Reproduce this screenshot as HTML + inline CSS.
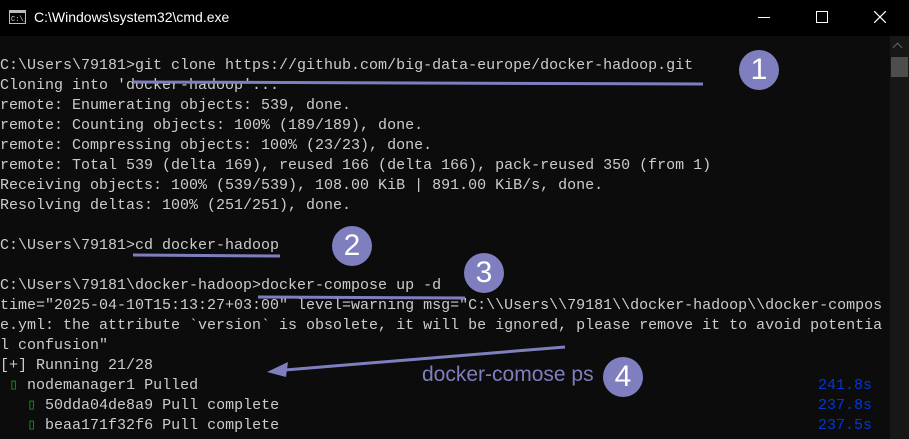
<!DOCTYPE html><html><head><style>
body{margin:0;width:909px;height:439px;background:#0c0c0c;overflow:hidden;position:relative;font-family:"Liberation Sans",sans-serif}
.tb{position:absolute;left:0;top:0;width:909px;height:36px;background:#000;color:#fff;font-size:14px}
pre{position:absolute;left:0;top:56px;margin:0;font-family:"Liberation Mono",monospace;font-size:15px;line-height:20px;color:#cccccc}
.g{color:#13a10e}
.b{position:absolute;left:818px;font-family:"Liberation Mono",monospace;font-size:15px;line-height:20px;color:#0037da}
.sb{position:absolute;left:890px;top:36px;width:19px;height:403px;background:#171717}
.c{position:absolute;width:40px;height:40px;border-radius:50%;background:#7f7fbf;color:#fff;font-size:30px;text-align:center;line-height:40px}
</style></head><body>
<div class="tb">
<svg style="position:absolute;left:9px;top:10px" width="17" height="14"><rect x="0.5" y="0.5" width="16" height="13" fill="#000" stroke="#bbb"/><rect x="1" y="1" width="15" height="2" fill="#bbb"/><text x="2" y="11" font-size="7" fill="#ddd" font-family="Liberation Mono">C:\_</text></svg>
<span style="position:absolute;left:34px;top:9px">C:\Windows\system32\cmd.exe</span>
<div style="position:absolute;left:758px;top:17px;width:12px;height:1px;background:#fff"></div>
<div style="position:absolute;left:816px;top:11px;width:10px;height:10px;border:1px solid #fff"></div>
<svg style="position:absolute;left:874px;top:11px" width="12" height="12"><path d="M0 0L12 12M12 0L0 12" stroke="#fff" stroke-width="1.2"/></svg>
</div>
<pre>C:\Users\79181>git clone https://github.com/big-data-europe/docker-hadoop.git
Cloning into 'docker-hadoop'...
remote: Enumerating objects: 539, done.
remote: Counting objects: 100% (189/189), done.
remote: Compressing objects: 100% (23/23), done.
remote: Total 539 (delta 169), reused 166 (delta 166), pack-reused 350 (from 1)
Receiving objects: 100% (539/539), 108.00 KiB | 891.00 KiB/s, done.
Resolving deltas: 100% (251/251), done.

C:\Users\79181>cd docker-hadoop

C:\Users\79181\docker-hadoop>docker-compose up -d
time="2025-04-10T15:13:27+03:00" level=warning msg="C:\\Users\\79181\\docker-hadoop\\docker-compos
e.yml: the attribute `version` is obsolete, it will be ignored, please remove it to avoid potentia
l confusion"
[+] Running 21/28
 <span class="g">▯</span> nodemanager1 Pulled
   <span class="g">▯</span> 50dda04de8a9 Pull complete
   <span class="g">▯</span> beaa171f32f6 Pull complete</pre>
<div class="b" style="top:376px">241.8s</div>
<div class="b" style="top:396px">237.8s</div>
<div class="b" style="top:416px">237.5s</div>
<div class="sb"><div style="position:absolute;left:4px;top:8px;width:6px;height:6px;border-left:1.5px solid #666;border-top:1.5px solid #666;transform:rotate(45deg)"></div><div style="position:absolute;left:1px;top:21px;width:17px;height:20px;background:#4d4d4d"></div></div>
<svg style="position:absolute;left:0;top:0" width="909" height="439">
<path d="M133 82L703 84M133 255L280 256M258 297L465 298" stroke="#7f7fbf" stroke-width="3" fill="none"/>
<path d="M565 347L285 370" stroke="#7f7fbf" stroke-width="3"/>
<path d="M267 372L288 362L286 377Z" fill="#7f7fbf"/>
</svg>
<div class="c" style="left:739px;top:50px">1</div>
<div class="c" style="left:332px;top:226px">2</div>
<div class="c" style="left:464px;top:253px">3</div>
<div class="c" style="left:603px;top:357px">4</div>
<div style="position:absolute;left:422px;top:363px;color:#7f7fbf;font-size:21px">docker-comose ps</div>
</body></html>
